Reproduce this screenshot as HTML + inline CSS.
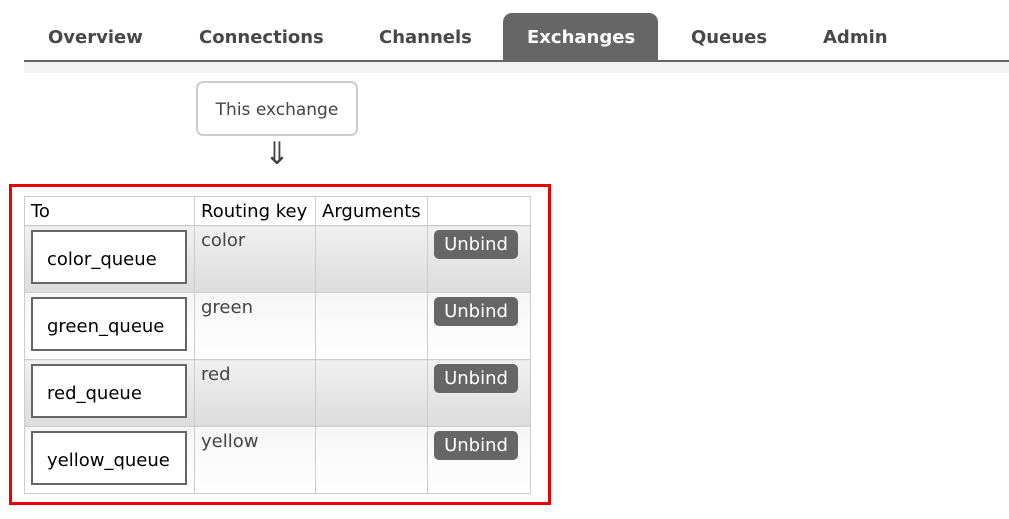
<!DOCTYPE html>
<html><head><style>
body{margin:0;width:1009px;height:519px;background:#fff;font-family:"DejaVu Sans","Liberation Sans",sans-serif;position:relative;overflow:hidden}
.tab{position:absolute;top:27px;font-weight:bold;font-size:18px;color:#484848}
.act{position:absolute;left:503px;top:13px;width:155px;height:48px;background:#666;border-radius:9px 9px 0 0}
.line{position:absolute;left:24px;top:60px;width:985px;height:2px;background:#666}
.band{position:absolute;left:24px;top:62px;width:985px;height:11px;background:#f3f3f3}
.ex{position:absolute;left:196px;top:81px;width:158px;height:51px;border:2px solid #ccc;border-radius:7px;font-size:17px;color:#444;line-height:54px;text-align:center}
.arr{position:absolute;left:264px;top:136px;font-size:31px;color:#444}
.red{position:absolute;left:9px;top:184px;width:536px;height:315px;border:3px solid #e00}
table{position:absolute;left:24px;top:196px;border-collapse:collapse;font-size:18px}
td{border:1px solid #ccc;vertical-align:top;padding:0;color:#333}
th{border:1px solid #ccc;font-weight:normal;text-align:left;height:28px;padding:0 6px;color:#000;white-space:nowrap}
tr.o td{background:linear-gradient(#f0f0f0,#dcdcdc)}
tr.e td{background:linear-gradient(#f6f6f6,#fff)}
tr.o,tr.e{height:67px}
.q{margin:4px 6px;border:2px solid #666;background:#fff;color:#000;font-size:18px;line-height:56px;padding-left:14px;box-sizing:border-box;width:156px;height:54px;white-space:nowrap}
.rk{padding:4px 6px;font-size:18px;color:#444}
.ub{margin:4px 6px;width:84px;height:29px;background:#666;border-radius:5px;color:#fff;font-size:18px;line-height:29px;text-align:center}
</style></head><body>
<div class="act"></div>
<div class="tab" style="left:48px">Overview</div>
<div class="tab" style="left:199px">Connections</div>
<div class="tab" style="left:379px">Channels</div>
<div class="tab" style="left:527px;color:#fff">Exchanges</div>
<div class="tab" style="left:691px">Queues</div>
<div class="tab" style="left:823px">Admin</div>
<div class="line"></div><div class="band"></div>
<div class="ex">This exchange</div>
<div class="arr">⇓</div>
<div class="red"></div>
<table>
<tr><th style="width:157px">To</th><th style="width:108px">Routing key</th><th style="width:99px">Arguments</th><th style="width:90px"></th></tr>
<tr class="o"><td><div class="q">color_queue</div></td><td class="rk">color</td><td></td><td><div class="ub">Unbind</div></td></tr>
<tr class="e"><td><div class="q">green_queue</div></td><td class="rk">green</td><td></td><td><div class="ub">Unbind</div></td></tr>
<tr class="o"><td><div class="q">red_queue</div></td><td class="rk">red</td><td></td><td><div class="ub">Unbind</div></td></tr>
<tr class="e"><td><div class="q">yellow_queue</div></td><td class="rk">yellow</td><td></td><td><div class="ub">Unbind</div></td></tr>
</table>
</body></html>
